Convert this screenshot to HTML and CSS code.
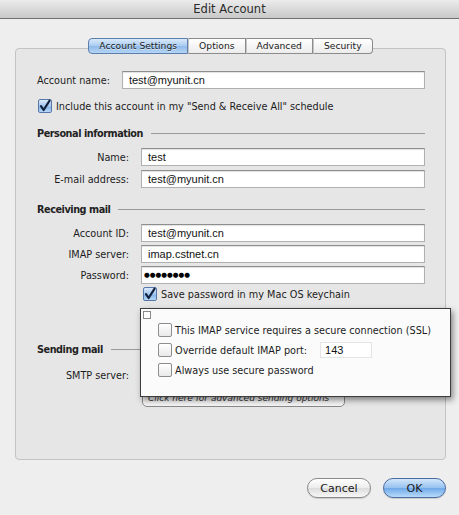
FILE: index.html
```html
<!DOCTYPE html>
<html lang="en">
<head>
    <meta charset="UTF-8">
    <title>Edit Account</title>
    <link rel="stylesheet" href="styles.css">
</head>
<body>
    <div class="titlebar">Edit Account</div>

    <div class="sheet">
        <div class="tabs">
            <span class="tab active">Account Settings</span>
            <span class="tab">Options</span>
            <span class="tab">Advanced</span>
            <span class="tab">Security</span>
        </div>

        <div class="panel">
            <div class="row">
                <span class="label-inline">Account name:</span>
                <span class="field">test@myunit.cn</span>
            </div>
            <div class="check-row include">
                <span class="checkbox checked">
                    <svg width="14" height="14" viewBox="0 0 14 14"><path d="M3 7.2 L5.6 11 L11.6 1.6" fill="none" stroke="#14213d" stroke-width="2.2" stroke-linecap="round" stroke-linejoin="round"/></svg>
                </span>
                <span>Include this account in my "Send &amp; Receive All" schedule</span>
            </div>

            <div class="section personal"><span>Personal information</span><span class="rule"></span></div>
            <div class="row name-row">
                <span class="label">Name:</span>
                <span class="field">test</span>
            </div>
            <div class="row tight">
                <span class="label">E-mail address:</span>
                <span class="field">test@myunit.cn</span>
            </div>

            <div class="section receiving"><span>Receiving mail</span><span class="rule"></span></div>
            <div class="row name-row">
                <span class="label">Account ID:</span>
                <span class="field">test@myunit.cn</span>
            </div>
            <div class="row tighter">
                <span class="label">IMAP server:</span>
                <span class="field">imap.cstnet.cn</span>
            </div>
            <div class="row tighter">
                <span class="label">Password:</span>
                <span class="field dots">&#9679;&#9679;&#9679;&#9679;&#9679;&#9679;&#9679;&#9679;</span>
            </div>
            <div class="check-row save">
                <span class="checkbox checked">
                    <svg width="14" height="14" viewBox="0 0 14 14"><path d="M3 7.2 L5.6 11 L11.6 1.6" fill="none" stroke="#14213d" stroke-width="2.2" stroke-linecap="round" stroke-linejoin="round"/></svg>
                </span>
                <span>Save password in my Mac OS keychain</span>
            </div>

            <div class="section sending"><span>Sending mail</span><span class="rule"></span></div>
            <div class="row smtp">
                <span class="label">SMTP server:</span>
                <span class="field"></span>
            </div>
            <div class="more-button">Click here for advanced sending options</div>

            <!-- popup sheet for advanced receiving options, lies over the form -->
            <div class="popup">
                <span class="mini-box"></span>
                <div class="popup-row first">
                    <span class="checkbox"></span>
                    <span>This IMAP service requires a secure connection (SSL)</span>
                </div>
                <div class="popup-row">
                    <span class="checkbox"></span>
                    <span>Override default IMAP port:</span>
                    <span class="port">143</span>
                </div>
                <div class="popup-row">
                    <span class="checkbox"></span>
                    <span>Always use secure password</span>
                </div>
            </div>
        </div>

        <div class="actions">
            <button class="btn">Cancel</button>
            <button class="btn primary">OK</button>
        </div>
    </div>
</body>
</html>
```

FILE: styles.css
```css
body {
    margin: 0;
    padding: 0;
    width: 459px;
    height: 515px;
    overflow: hidden;
    background-color: #eeeeee;
    font-family: "DejaVu Sans", sans-serif;
    font-size: 9.7px;
    color: #1c1c1c;
}

.titlebar {
    height: 18px;
    line-height: 18px;
    text-align: center;
    font-size: 11.5px;
    color: #2a2a2a;
    background: linear-gradient(#ececec, #c8c8c8);
    border-bottom: 1px solid #6f6f6f;
}

.sheet {
    padding-top: 19px;
}

.tabs {
    display: flex;
    justify-content: center;
    position: relative;
    z-index: 1;
    margin-left: 2px;
}

.tab {
    height: 14px;
    line-height: 14px;
    padding: 0 10px;
    font-size: 9.2px;
    color: #222;
    background: linear-gradient(#ffffff, #ececec);
    border: 1px solid #8c8c8c;
    border-left: 1px solid #c4c4c4;
}

.tab:first-child {
    border-left: 1px solid #8c8c8c;
    border-radius: 4px 0 0 4px;
}

.tab:last-child {
    border-radius: 0 4px 4px 0;
}

.tab.active {
    background: linear-gradient(#d9e9fb, #a9cbf0 50%, #8fbbe9 51%, #b4d4f5);
    border-color: #5d7fae;
    text-shadow: 0 1px 0 rgba(255, 255, 255, 0.6);
}

.panel {
    position: relative;
    box-sizing: border-box;
    height: 412px;
    margin: -6px 13px 0 15px;
    padding: 22px 20px 0 21px;
    background-color: #e6e6e6;
    border: 1px solid #c3c3c3;
    border-radius: 4px;
}

.row {
    display: flex;
    align-items: center;
    height: 18px;
}

.row.name-row {
    margin-top: 8px;
}

.row.tight {
    margin-top: 4px;
}

.row.tighter {
    margin-top: 3px;
}

.row.smtp {
    margin-top: 10px;
}

.label-inline {
    margin-right: 12px;
}

.label {
    width: 92px;
    margin-right: 12px;
    text-align: right;
    flex-shrink: 0;
}

.field {
    flex: 1;
    box-sizing: border-box;
    height: 18px;
    line-height: 17px;
    padding-left: 6px;
    font-family: "Liberation Sans", Arial, sans-serif;
    font-size: 11px;
    color: #111;
    background-color: #ffffff;
    border: 1px solid #b0b0b0;
    border-top-color: #8e8e8e;
    box-shadow: inset 0 1px 1px rgba(0, 0, 0, 0.12);
}

.field.dots {
    padding-left: 2px;
    font-family: "DejaVu Sans", sans-serif;
    font-size: 6.6px;
    color: #000;
}

.check-row {
    display: flex;
    align-items: center;
    height: 14px;
}

.check-row.include {
    margin-top: 10px;
    padding-left: 1px;
}

.check-row.save {
    margin-top: 3px;
    padding-left: 106px;
}

.checkbox {
    box-sizing: border-box;
    width: 14px;
    height: 14px;
    margin-right: 4px;
    flex-shrink: 0;
    background: linear-gradient(#ffffff, #e9e9e9);
    border: 1px solid #8d8d8d;
    border-radius: 2px;
}

.checkbox svg {
    display: block;
    margin: -1px 0 0 -1px;
}

.checkbox.checked {
    background: linear-gradient(#dceafb, #9cc3ee 55%, #82b3e8 56%, #b9d7f6);
    border-color: #5878a8;
}

.section {
    display: flex;
    align-items: center;
    height: 14px;
    font-weight: bold;
    letter-spacing: -0.45px;
    color: #222;
}

.section .rule {
    flex: 1;
    height: 1px;
    margin-left: 8px;
    background-color: #9a9a9a;
}

.section.personal {
    margin-top: 13px;
}

.section.receiving {
    margin-top: 14px;
}

.section.sending {
    margin-top: 41px;
}

.more-button {
    box-sizing: border-box;
    width: 203px;
    height: 16px;
    line-height: 13px;
    margin: 7px 0 0 105px;
    padding-left: 5px;
    font-size: 9px;
    font-style: italic;
    color: #333;
    background-color: #f4f4f4;
    border: 1px solid #8a8a8a;
    border-radius: 5px;
}

.popup {
    position: absolute;
    left: 124px;
    top: 259px;
    box-sizing: border-box;
    width: 311px;
    height: 89px;
    padding: 14px 0 0 17px;
    background-color: #fbfbfb;
    border: 1px solid #3c3c3c;
    box-shadow: 2px 3px 6px rgba(0, 0, 0, 0.45);
}

.mini-box {
    position: absolute;
    left: 2px;
    top: 2px;
    width: 6px;
    height: 6px;
    background-color: #fff;
    border: 1px solid #8a8a8a;
}

.popup-row {
    display: flex;
    align-items: center;
    height: 14px;
    margin-top: 6px;
    color: #1c1c1c;
}

.popup-row.first {
    margin-top: 0;
}

.popup-row .checkbox {
    margin-right: 3px;
}

.port {
    box-sizing: border-box;
    width: 52px;
    height: 16px;
    line-height: 15px;
    margin-left: 13px;
    padding-left: 4px;
    font-family: "Liberation Sans", Arial, sans-serif;
    font-size: 11px;
    color: #111;
    background-color: #ffffff;
    border: 1px solid #e4e4e4;
}

.actions {
    display: flex;
    justify-content: flex-end;
    gap: 12px;
    margin: 18px 13px 0 0;
}

.btn {
    box-sizing: border-box;
    width: 64px;
    height: 20px;
    padding: 0;
    font-family: "DejaVu Sans", sans-serif;
    font-size: 11px;
    color: #1a1a1a;
    background: linear-gradient(#ffffff, #ececec 50%, #dcdcdc 51%, #f7f7f7);
    border: 1px solid #8a8a8a;
    border-radius: 10px;
    box-shadow: 0 1px 1px rgba(0, 0, 0, 0.15);
}

.btn.primary {
    width: 63px;
    background: linear-gradient(#d3e6fb, #95c1ef 50%, #6fa9e8 51%, #b8dafb);
    border-color: #4a6d9f;
}
```
